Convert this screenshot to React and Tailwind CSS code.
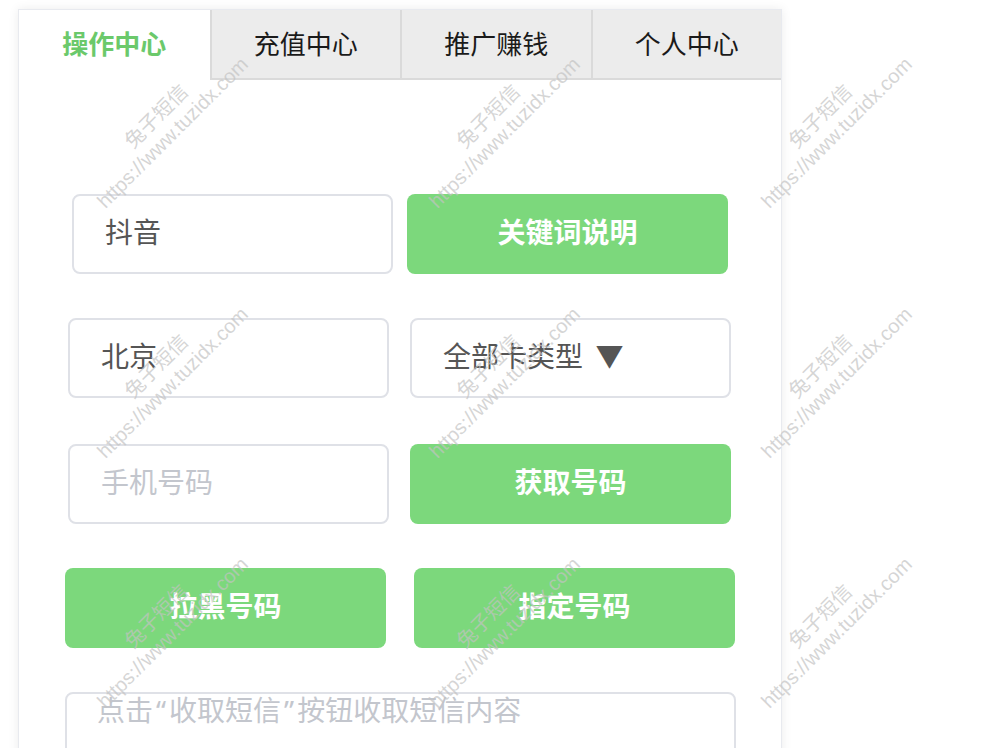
import React from "react";

const tabs = ["操作中心", "充值中心", "推广赚钱", "个人中心"];

// watermark centres (repeated grid over the whole page)
const marks = [];
for (const y of [124, 374, 624]) {
  for (const x of [164, 496, 828]) marks.push({ x, y });
}

const font = { fontFamily: '"Noto Sans CJK SC", "Noto Sans", sans-serif' };

function Field({ children, className = "" }) {
  return (
    <div
      className={`h-[80px] w-[321px] rounded-[8px] border-2 border-[#dfe1e7] bg-white pl-[31px] pb-[6px] flex items-center text-[28px] ${className}`}
    >
      {children}
    </div>
  );
}

function GreenButton({ children }) {
  return (
    <div className="h-[80px] w-[321px] rounded-[8px] bg-[#7cd87c] pb-[6px] flex items-center justify-center text-[28px] font-bold text-white">
      {children}
    </div>
  );
}

const q = "font-['Noto_Sans',sans-serif] px-[3px]";

export default function App() {
  return (
    <div className="relative h-[748px] w-full overflow-hidden bg-white" style={font}>
      <div className="pl-[18px] pt-[9px]">
        <div className="w-[764px] min-h-[800px] bg-white border border-[#e8eaef] shadow-[0_0_10px_rgba(0,0,0,0.08)]">
          {/* Tabs */}
          <div className="grid grid-cols-4 h-[70px]">
            {tabs.map((t, i) =>
              i === 0 ? (
                <div
                  key={t}
                  className="flex items-center justify-center bg-white pb-[6px] text-[26px] font-bold text-[#6bc96b]"
                >
                  {t}
                </div>
              ) : (
                <div
                  key={t}
                  className="flex items-center justify-center bg-[#ececec] border-l-2 border-b-2 border-[#dadada] pb-[4px] text-[26px] text-[#1a1a1a]"
                >
                  {t}
                </div>
              )
            )}
          </div>

          {/* Form */}
          <div className="pt-[114px]">
            <div className="flex gap-[14px] pl-[53px]">
              <Field className="text-[#555]">抖音</Field>
              <GreenButton>关键词说明</GreenButton>
            </div>

            <div className="mt-[44px] flex gap-[21px] pl-[49px]">
              <Field className="text-[#555]">北京</Field>
              <Field className="text-[#555]">全部卡类型&nbsp;&nbsp;▼</Field>
            </div>

            <div className="mt-[46px] flex gap-[21px] pl-[49px]">
              <Field className="text-[#c3c6cd]">手机号码</Field>
              <GreenButton>获取号码</GreenButton>
            </div>

            <div className="mt-[44px] flex gap-[28px] pl-[46px]">
              <GreenButton>拉黑号码</GreenButton>
              <GreenButton>指定号码</GreenButton>
            </div>

            <div className="mt-[44px] ml-[46px] w-[671px] h-[140px] rounded-[8px] border-2 border-[#dfe1e7] pl-[30px] text-[28px] leading-[30px] text-[#c3c6cd]">
              点击<span className={q}>“</span>收取短信<span className={q}>”</span>按钮收取短信内容
            </div>
          </div>
        </div>
      </div>

      {/* Watermark overlay */}
      <div className="pointer-events-none absolute inset-0">
        {marks.map((m, i) => (
          <div
            key={i}
            className="absolute -translate-x-1/2 -translate-y-1/2 -rotate-45 whitespace-nowrap text-center text-[20px] leading-[25px] text-[rgba(195,195,195,0.7)]"
            style={{ left: m.x, top: m.y }}
          >
            <div>兔子短信</div>
            <div style={{ fontFamily: '"Liberation Sans", sans-serif' }}>https://www.tuzidx.com</div>
          </div>
        ))}
      </div>
    </div>
  );
}
